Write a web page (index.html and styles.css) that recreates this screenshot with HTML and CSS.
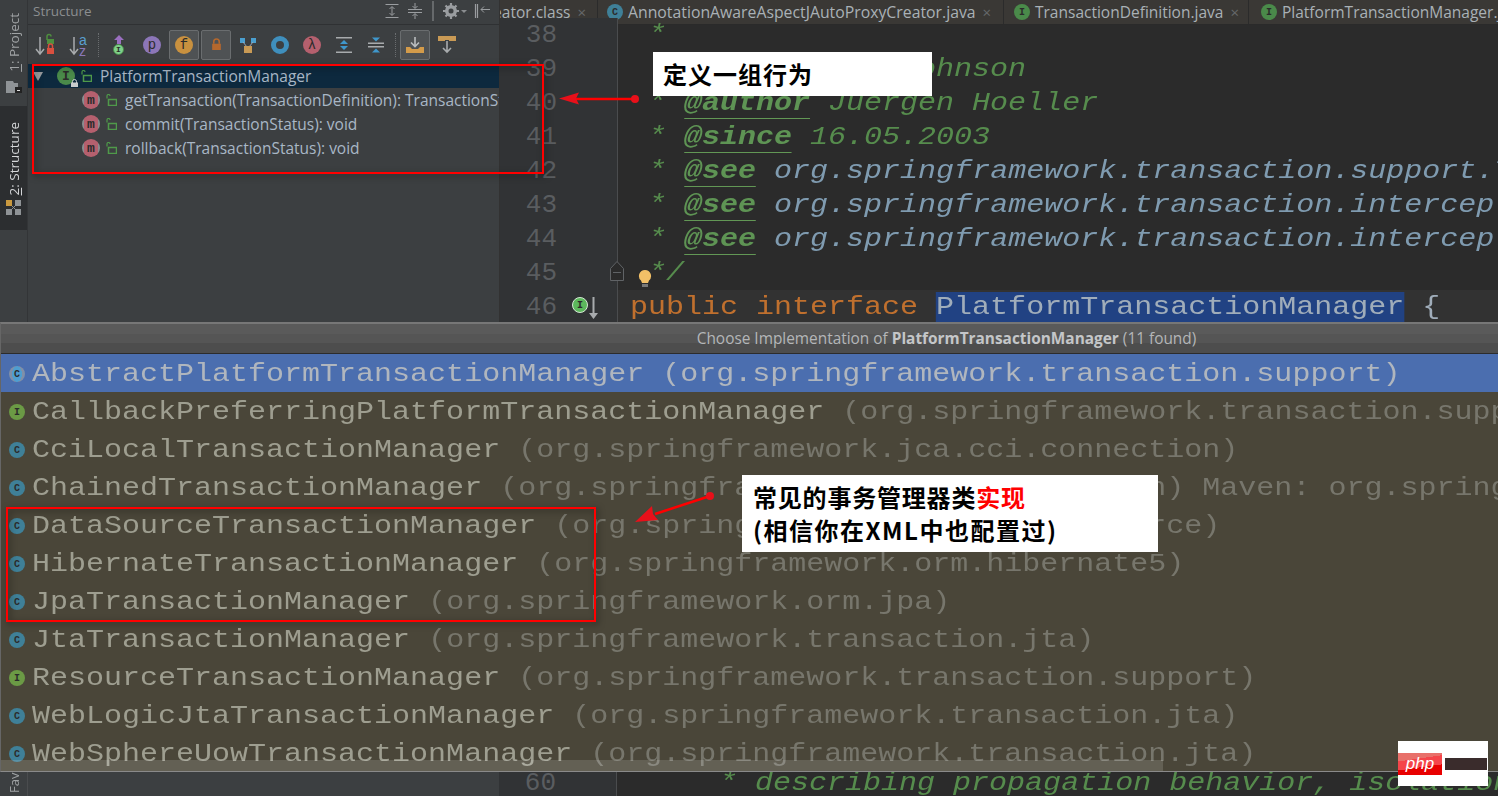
FILE: index.html
```html
<!DOCTYPE html>
<html lang="en">
<head>
<meta charset="utf-8">
<title>PlatformTransactionManager</title>
<link rel="stylesheet" href="styles.css">
</head>
<body>
<div class="page">
  <section class="top">
    <nav class="rail">
      <div class="rail-item rail-project">
        <span class="rail-label"><u>1</u>: Project</span>
        <svg class="rail-icon" width="16" height="14" viewBox="0 0 16 14"><path d="M0 2h7l1 2h4v10H0z" fill="#8f9396"/><rect x="9" y="8" width="7" height="6" fill="#222"/><rect x="11" y="11" width="3" height="1" fill="#ddd"/></svg>
      </div>
      <div class="rail-item rail-structure">
        <span class="rail-label"><u>2</u>: Structure</span>
        <svg class="rail-icon" width="15" height="15" viewBox="0 0 15 15"><rect width="6" height="6" fill="#c9993f"/><rect x="9" width="6" height="6" fill="#8f9396"/><rect y="9" width="6" height="6" fill="#8f9396"/><rect x="9" y="9" width="6" height="6" fill="#8f9396"/><path d="M6 6l3 3M9 6L6 9" stroke="#8f9396"/></svg>
      </div>
    </nav>

    <aside class="structure">
      <header class="panel-head">
        <span class="panel-title">Structure</span>
        <div class="panel-actions">
          <svg width="16" height="16" viewBox="0 0 16 16" fill="none" stroke="#9a9da0"><path d="M1.500 1.500h13M1.500 14.500h13M8 4v8M5.500 6L8 3.500 10.500 6M5.500 10L8 12.500 10.500 10"/></svg>
          <svg width="16" height="16" viewBox="0 0 16 16" fill="none" stroke="#9a9da0"><path d="M1 6.500h14M1 9.500h14M8 0v5M5.500 3L8 5.500 10.500 3M8 16v-5M5.500 13L8 10.500 10.500 13"/></svg>
          <span class="head-sep"></span>
          <svg width="24" height="16" viewBox="0 0 24 16"><circle cx="8" cy="8" r="4.500" fill="none" stroke="#9a9da0" stroke-width="3"/><path d="M8 0v16M0 8h16M2.500 2.500l11 11M13.500 2.500l-11 11" stroke="#9a9da0" stroke-width="2.200"/><circle cx="8" cy="8" r="2.500" fill="#3c3f41"/><path d="M18 7h6l-3 3z" fill="#8a8d90"/></svg>
          <svg width="16" height="16" viewBox="0 0 16 16" fill="none" stroke="#9a9da0"><path d="M1.500 1v14M3.500 1v14" stroke-width="1.200"/><path d="M7 6.500h9M10 3.500L7 6.500l3 3"/></svg>
        </div>
      </header>

      <div class="toolbar">
        <button class="tool"><svg width="24" height="24" viewBox="0 0 24 24"><path d="M6 4v17M2 16l4 5 4-5" fill="none" stroke="#a8abad" stroke-width="1.500"/><path d="M13 7V3.500a2 2 0 0 1 4 0" fill="none" stroke="#4e8f3f" stroke-width="1.500"/><rect x="13" y="6" width="7" height="5" fill="#4e8f3f"/><path d="M14.500 15v-2a2 2 0 0 1 4 0v2" fill="none" stroke="#d9503f" stroke-width="1.500"/><rect x="13" y="15" width="7" height="6" fill="#d9503f"/></svg></button>
        <button class="tool tool-az"><svg width="24" height="24" viewBox="0 0 24 24"><path d="M6 4v17M2 16l4 5 4-5" fill="none" stroke="#a8abad" stroke-width="1.500"/><text x="11" y="12" class="az az-a">a</text><text x="11" y="23" class="az az-z">z</text></svg></button>
        <span class="tool-sep"></span>
        <button class="tool tool-up"><span class="up-icon"><svg width="10" height="9" viewBox="0 0 10 9"><path d="M5 0l5 5H7v4H3V5H0z" fill="#9a6fc0"/></svg><span class="badge badge-i-light">I</span></span></button>
        <button class="tool"><span class="badge badge-lg badge-p">p</span></button>
        <button class="tool tool-on"><span class="badge badge-lg badge-f">f</span></button>
        <button class="tool tool-on"><svg width="11" height="13" viewBox="0 0 14 16"><path d="M3.500 7V4.500a3.500 3.500 0 0 1 7 0V7" fill="none" stroke="#b5682d" stroke-width="2"/><rect x="1.500" y="7" width="11" height="8" fill="#b5682d"/></svg></button>
        <button class="tool"><svg width="16" height="16" viewBox="0 0 16 16"><rect y="1" width="5" height="5" fill="#4a9fd0"/><rect x="11" y="1" width="5" height="5" fill="#4a9fd0"/><path d="M3 5l4 5M13 5l-4 5" stroke="#9ab" /><rect x="4" y="9" width="8" height="7" fill="#c99a55"/></svg></button>
        <button class="tool"><span class="donut"></span></button>
        <button class="tool"><span class="badge badge-lg badge-l">λ</span></button>
        <button class="tool"><svg width="18" height="18" viewBox="0 0 18 18"><path d="M1 1h16v1.500H1zM1 15.500h16V17H1z" fill="#a8abad"/><path d="M9 4l4 4H5zM9 14l-4-4h8z" fill="#3f97cc"/></svg></button>
        <button class="tool"><svg width="18" height="18" viewBox="0 0 18 18"><path d="M1 6.500h16V8H1zM1 10h16v1.500H1z" fill="#a8abad"/><path d="M9 5.500l-4-4h8zM9 12.500l4 4H5z" fill="#3f97cc"/></svg></button>
        <span class="tool-sep tool-sep-2"></span>
        <button class="tool tool-on"><svg width="18" height="18" viewBox="0 0 18 18"><path d="M9 1v9M5 6.500l4 4 4-4" fill="none" stroke="#b9bcbe" stroke-width="1.600"/><path d="M0 11h4l2 2h6l2-2h4v6H0z" fill="#d39b4a"/></svg></button>
        <button class="tool"><svg width="18" height="18" viewBox="0 0 18 18"><path d="M0 0h18v5H11v-1H7v1H0z" fill="#c99a55"/><path d="M9 5v11M5 12l4 4 4-4" fill="none" stroke="#a8abad" stroke-width="1.600"/></svg></button>
      </div>

      <ul class="tree">
        <li class="tree-row tree-root">
          <svg class="twisty" width="10" height="9" viewBox="0 0 10 9"><path d="M0 0h10L5 9z" fill="#9a9da0"/></svg>
          <span class="badge badge-md badge-i"><span>I</span><svg class="badge-lock" width="7" height="8" viewBox="0 0 7 8"><path d="M1.500 4V2.500a2 2 0 0 1 4 0V4" fill="none" stroke="#c9ccce"/><rect y="3.500" width="7" height="4.500" fill="#c9ccce"/></svg></span>
          <svg class="open-lock" width="11" height="12" viewBox="0 0 11 12"><path d="M1 4.500V2a1.500 1.500 0 0 1 3 0" fill="none" stroke="#4f9a4a" stroke-width="1.200"/><rect x="2.500" y="5.500" width="8" height="6" fill="none" stroke="#4f9a4a" stroke-width="1.500"/></svg>
          <span class="tree-text">PlatformTransactionManager</span>
        </li>
        <li class="tree-row tree-child">
          <span class="badge badge-md badge-m">m</span>
          <svg class="open-lock" width="11" height="12" viewBox="0 0 11 12"><path d="M1 4.500V2a1.500 1.500 0 0 1 3 0" fill="none" stroke="#4f9a4a" stroke-width="1.200"/><rect x="2.500" y="5.500" width="8" height="6" fill="none" stroke="#4f9a4a" stroke-width="1.500"/></svg>
          <span class="tree-text">getTransaction(TransactionDefinition): TransactionStatus</span>
        </li>
        <li class="tree-row tree-child">
          <span class="badge badge-md badge-m">m</span>
          <svg class="open-lock" width="11" height="12" viewBox="0 0 11 12"><path d="M1 4.500V2a1.500 1.500 0 0 1 3 0" fill="none" stroke="#4f9a4a" stroke-width="1.200"/><rect x="2.500" y="5.500" width="8" height="6" fill="none" stroke="#4f9a4a" stroke-width="1.500"/></svg>
          <span class="tree-text">commit(TransactionStatus): void</span>
        </li>
        <li class="tree-row tree-child">
          <span class="badge badge-md badge-m">m</span>
          <svg class="open-lock" width="11" height="12" viewBox="0 0 11 12"><path d="M1 4.500V2a1.500 1.500 0 0 1 3 0" fill="none" stroke="#4f9a4a" stroke-width="1.200"/><rect x="2.500" y="5.500" width="8" height="6" fill="none" stroke="#4f9a4a" stroke-width="1.500"/></svg>
          <span class="tree-text">rollback(TransactionStatus): void</span>
        </li>
      </ul>
    </aside>

    <main class="editor">
      <div class="tabs">
        <div class="tab tab-clipped"><span class="tab-name">AopProxyCreator.class</span><span class="tab-x">×</span></div>
        <div class="tab tab-2"><span class="badge badge-sm badge-c">C</span><span class="tab-name">AnnotationAwareAspectJAutoProxyCreator.java</span><span class="tab-x">×</span></div>
        <div class="tab tab-3"><span class="badge badge-sm badge-i">I</span><span class="tab-name">TransactionDefinition.java</span><span class="tab-x">×</span></div>
        <div class="tab tab-4"><span class="badge badge-sm badge-i">I</span><span class="tab-name">PlatformTransactionManager.java</span></div>
      </div>
      <div class="code">
        <div class="line"><span class="num">38</span><span class="src"><span class="cm"> *</span></span></div>
        <div class="line"><span class="num">39</span><span class="src"><span class="cm"> * </span><span class="tag">@author</span><span class="cm"> Rod Johnson</span></span></div>
        <div class="line"><span class="num">40</span><span class="src"><span class="cm"> * </span><span class="tag">@author</span><span class="cm"> Juergen Hoeller</span></span></div>
        <div class="line"><span class="num">41</span><span class="src"><span class="cm"> * </span><span class="tag">@since</span><span class="cm"> 16.05.2003</span></span></div>
        <div class="line"><span class="num">42</span><span class="src"><span class="cm"> * </span><span class="tag">@see</span> <span class="ref">org.springframework.transaction.support.TransactionTemplate</span></span></div>
        <div class="line"><span class="num">43</span><span class="src"><span class="cm"> * </span><span class="tag">@see</span> <span class="ref">org.springframework.transaction.interceptor.TransactionInterceptor</span></span></div>
        <div class="line"><span class="num">44</span><span class="src"><span class="cm"> * </span><span class="tag">@see</span> <span class="ref">org.springframework.transaction.interceptor.TransactionProxyFactoryBean</span></span></div>
        <div class="line line-fold">
          <span class="num">45</span>
          <svg class="fold" width="14" height="20" viewBox="0 0 14 20"><path d="M.5 7.500L7 .5l6.500 7v12H.5z" fill="#2b2b2b" stroke="#606366"/><path d="M3 11.500h8" stroke="#606366"/></svg>
          <svg class="bulb" width="14" height="18" viewBox="0 0 14 18"><path d="M7 0a6 6 0 0 0-4 10.500L4 13h6l1-2.500A6 6 0 0 0 7 0z" fill="#f3c067"/><rect x="4" y="14" width="6" height="3" fill="#777"/></svg>
          <span class="src"><span class="cm"> */</span></span>
        </div>
        <div class="line line-current">
          <span class="num">46</span>
          <span class="impl"><span class="badge badge-sm badge-impl">I</span><svg width="9" height="22" viewBox="0 0 9 22"><path d="M3.500 0h2v16H9l-4.500 6L0 16h3.500z" fill="#a8abad"/></svg></span>
          <span class="src"><span class="kw">public interface</span> <span class="sel">PlatformTransactionManager</span> {</span>
        </div>
      </div>
    </main>
  </section>

  <section class="popup">
    <header class="popup-head">Choose Implementation of <b>PlatformTransactionManager</b> (11 found)</header>
    <ul class="list">
      <li class="row row-sel"><span class="badge badge-sm badge-c badge-c-sel">C</span><span class="row-text">AbstractPlatformTransactionManager <span class="pkg">(org.springframework.transaction.support)</span></span></li>
      <li class="row"><span class="badge badge-sm badge-ii">I</span><span class="row-text">CallbackPreferringPlatformTransactionManager <span class="pkg">(org.springframework.transaction.support)</span></span></li>
      <li class="row"><span class="badge badge-sm badge-c">C</span><span class="row-text">CciLocalTransactionManager <span class="pkg">(org.springframework.jca.cci.connection)</span></span></li>
      <li class="row"><span class="badge badge-sm badge-c">C</span><span class="row-text">ChainedTransactionManager <span class="pkg">(org.springframework.data.transaction) Maven: org.springframework.data</span></span></li>
      <li class="row"><span class="badge badge-sm badge-c">C</span><span class="row-text">DataSourceTransactionManager <span class="pkg">(org.springframework.jdbc.datasource)</span></span></li>
      <li class="row"><span class="badge badge-sm badge-c">C</span><span class="row-text">HibernateTransactionManager <span class="pkg">(org.springframework.orm.hibernate5)</span></span></li>
      <li class="row"><span class="badge badge-sm badge-c">C</span><span class="row-text">JpaTransactionManager <span class="pkg">(org.springframework.orm.jpa)</span></span></li>
      <li class="row"><span class="badge badge-sm badge-c">C</span><span class="row-text">JtaTransactionManager <span class="pkg">(org.springframework.transaction.jta)</span></span></li>
      <li class="row"><span class="badge badge-sm badge-ii">I</span><span class="row-text">ResourceTransactionManager <span class="pkg">(org.springframework.transaction.support)</span></span></li>
      <li class="row"><span class="badge badge-sm badge-c">C</span><span class="row-text">WebLogicJtaTransactionManager <span class="pkg">(org.springframework.transaction.jta)</span></span></li>
      <li class="row"><span class="badge badge-sm badge-c">C</span><span class="row-text">WebSphereUowTransactionManager <span class="pkg">(org.springframework.transaction.jta)</span></span></li>
    </ul>
    <div class="popup-scroll"></div>
  </section>

  <section class="bottom">
    <div class="fav"><span class="fav-label">Fav</span></div>
    <div class="line line-bottom"><span class="num">60</span><span class="src"><span class="cm">     * describing propagation behavior, isolation level, timeout etc.</span></span></div>
  </section>

  <svg class="marks" width="1498" height="796" viewBox="0 0 1498 796">
    <rect class="box" x="33" y="65" width="510" height="108"/>
    <rect class="box" x="7" y="508" width="588" height="113"/>
    <path class="arrow-line" d="M635 99H575"/>
    <path class="arrow-head" d="M559 98.500l20-6-3 6 3 6z"/>
    <circle class="arrow-dot" cx="635" cy="99" r="4"/>
    <path class="arrow-line" d="M710 496L655 514"/>
    <path class="arrow-head" d="M635 522l17-16 1 8 5 6z"/>
    <circle class="arrow-dot" cx="710" cy="496" r="4"/>
  </svg>
  <div class="note note-1">定义一组行为</div>
  <div class="note note-2">常见的事务管理器类<em>实现</em><br><span class="note-sub">(相信你在XML中也配置过)</span></div>
  <div class="watermark"><span class="wm-php">php</span><span class="wm-text"></span></div>
</div>
</body>
</html>
```
FILE: styles.css
```css
* { box-sizing: border-box; }
html, body { margin: 0; padding: 0; background: #2b2b2b; }
ul { list-style: none; margin: 0; padding: 0; }
button { border: 0; background: none; padding: 0; margin: 0; }

.page {
  position: relative;
  width: 1498px;
  height: 796px;
  overflow: hidden;
  display: flex;
  flex-direction: column;
  font-family: "Open Sans", "Noto Sans", sans-serif;
}

/* top area */
.top { display: flex; height: 322px; flex: none; }

.rail {
  width: 28px;
  flex: none;
  background: #3c3f41;
  border-right: 1px solid #333537;
  display: flex;
  flex-direction: column;
}
.rail-item {
  display: flex;
  flex-direction: column;
  align-items: center;
  color: #a0a3a5;
  font-size: 13.500px;
}
.rail-label { writing-mode: vertical-rl; transform: rotate(180deg); line-height: 16px; white-space: nowrap; }
.rail-project { height: 106px; padding-top: 13px; gap: 7px; }
.rail-structure { height: 124px; padding-top: 16px; gap: 5px; background: #2c2e30; color: #d4d6d8; }

.structure {
  width: 472px;
  flex: none;
  background: #3c3f41;
  border-right: 1px solid #323232;
  overflow: hidden;
}
.panel-head {
  height: 25px;
  display: flex;
  align-items: center;
  justify-content: space-between;
  padding: 0 9px 2px 5px;
  border-bottom: 1px solid #2f3133;
}
.panel-title { color: #8b8e90; font-size: 13.500px; }
.panel-actions { display: flex; align-items: center; gap: 7px; }
.head-sep { width: 2px; height: 20px; background: #66696b; margin: 0 2px; }

.toolbar { display: flex; align-items: center; gap: 2px; height: 39px; padding: 0 0 0 3px; }
.tool {
  width: 30px;
  height: 30px;
  flex: none;
  border: 1px solid transparent;
  border-radius: 2px;
  display: flex;
  align-items: center;
  justify-content: center;
}
.tool-on { background: #4f5254; border-color: #6a6d6f; }
.tool-az { padding-left: 4px; }
.tool-up { padding-right: 3px; }
.tool-sep { width: 6px; height: 24px; flex: none; border-left: 1px dotted #6a6d6f; margin-left: 3px; margin-right: -1px; }
.tool-sep-2 { margin-right: -3px; margin-left: 2px; }
.az { font-family: "Liberation Sans", sans-serif; font-size: 14px; font-weight: 400; }
.az-a { fill: #5a9fd0; }
.az-z { fill: #8a78b8; }
.up-icon { display: flex; flex-direction: column; align-items: center; }
.donut { width: 18px; height: 18px; border-radius: 50%; border: 5px solid #3f8fbd; background: #3c3f41; }

.badge {
  position: relative;
  display: inline-flex;
  align-items: center;
  justify-content: center;
  flex: none;
  border-radius: 50%;
  font-family: "Liberation Mono", monospace;
  font-weight: 700;
  color: #2b2b2b;
}
.badge-sm { width: 16px; height: 16px; font-size: 10px; }
.badge-md { width: 18px; height: 18px; font-size: 13px; }
.badge-lg { width: 18px; height: 18px; font-size: 14px; font-weight: 400; }
.badge-p { background: #8c76b8; }
.badge-f { background: #c9913f; }
.badge-l { background: #b5606e; }
.badge-i { background: #4a8a4a; }
.badge-i-light { width: 11px; height: 11px; background: #7fd08a; font-size: 8px; border: 1px solid #4a8a4a; }
.badge-ii { background: #6b9a45; }
.badge-c { background: #3f8098; }
.badge-c-sel { background: radial-gradient(ellipse 5px 8px, #4f9ed0 95%, #8090a8 100%); }
.badge-impl { background: #5cb85c; border: 1px solid #d5e8d5; }
.badge-m {
  background: linear-gradient(90deg, #8a8d90 0 2px, #b5606e 2px 16px, #8a8d90 16px);
}
.badge-lock { position: absolute; right: -3px; bottom: -2px; }

.tree-row { display: flex; align-items: center; height: 24px; white-space: nowrap; overflow: hidden; }
.tree-root { background: #0d293e; }
.twisty { margin: 0 14px 0 5px; flex: none; }
.tree-child { padding-left: 54px; }
.open-lock { margin: 0 8px 0 6px; flex: none; }
.tree-text { color: #a9b7c6; font-size: 15.500px; }

/* editor */
.editor { flex: 1; min-width: 0; display: flex; flex-direction: column; background: #2b2b2b; overflow: hidden; }
.tabs { height: 25px; flex: none; display: flex; background: #3a3835; border-bottom: 1px solid #2a2a2a; overflow: hidden; }
.tab {
  display: flex;
  align-items: center;
  flex: none;
  color: #a9b1b6;
  font-size: 15.500px;
  white-space: nowrap;
  border-right: 1px solid #2b2b2b;
}
.tab .badge { margin-right: 5px; }
.tab-x { color: #66696b; margin-left: 7px; font-size: 15px; }
.tab-clipped { width: 98px; justify-content: flex-end; padding-right: 11px; overflow: hidden; }
.tab-2 { width: 406px; padding-left: 9px; font-size: 15.800px; }
.tab-3 { width: 245px; padding-left: 10px; }
.tab-4 { padding-left: 12px; border-right: 0; }

.code { margin-top: -7px; }
.line { position: relative; display: flex; height: 34px; white-space: pre; }
.num {
  display: block;
  width: 118px;
  flex: none;
  padding-right: 60px;
  text-align: right;
  background: #313335;
  border-right: 1px solid #4a4c4e;
  color: #5a5d60;
  font: 400 26px/34px "Liberation Mono", monospace;
}
.src {
  display: block;
  margin-left: 12px;
  color: #a0adba;
  font: 400 26px/34px "Liberation Mono", monospace;
  transform: scaleX(1.154);
  transform-origin: left;
}
.cm { color: #568c4d; font-style: italic; }
.tag { color: #5e9454; font-weight: 700; font-style: italic; border-bottom: 1px solid #629755; }
.ref { color: #7f9bb0; font-style: italic; }
.kw { color: #c0702e; }
.sel { background: #214283; }
.line-current { background: #323232; }
.fold { position: absolute; left: 110px; top: 5px; z-index: 1; }
.bulb { position: absolute; left: 138px; top: 14px; z-index: 1; }
.impl { position: absolute; left: 72px; top: 7px; display: flex; gap: 1px; }

/* popup */
.popup { position: relative; height: 450px; flex: none; border-top: 2px solid #777; border-left: 1px solid #666; border-bottom: 1px solid #8a8a8a; background: #4a4639; overflow: hidden; }
.popup-head {
  height: 30px;
  line-height: 30px;
  text-align: center;
  padding-left: 394px;
  font-size: 15.400px;
  color: #b4b6b8;
  white-space: nowrap;
  background: linear-gradient(#5a5a5a 0 33%, #555 33% 66%, #4d4d4d 66%);
  border-bottom: 1px solid #2c2c2c;
}
.popup-head b { color: #c4c6c8; }
.row { display: flex; align-items: center; height: 38px; padding: 2px 0 0 8px; white-space: pre; }
.row .badge { margin-right: 7px; }
.row-text {
  font: 400 26px/36px "Liberation Mono", monospace;
  color: #9e9e90;
  transform: scaleX(1.154);
  transform-origin: left;
}
.pkg { color: #77766c; }
.row-sel { background: #4b6eaf; }
.row-sel .row-text { color: #b0b6be; }
.row-sel .pkg { color: #b0b6be; }
.popup-scroll { position: absolute; left: 0; bottom: 0; width: 1162px; height: 11px; background: rgba(255, 255, 255, .14); }

/* bottom */
.bottom { flex: 1; display: flex; overflow: hidden; background: #2b2b2b; }
.fav { width: 500px; flex: none; background: #3c3f41; color: #a0a3a5; font-size: 13px; }
.fav-label { display: block; width: 28px; height: 24px; text-align: right; padding-bottom: 1px; writing-mode: vertical-rl; transform: rotate(180deg); line-height: 28px; border-left: 1px solid #4a4c4e; }
.line-bottom { flex: 1; margin: -6px 0 0 -1px; }

/* annotations */
.marks { position: absolute; left: 0; top: 0; pointer-events: none; }
.box { fill: none; stroke: #f00; stroke-width: 2; filter: drop-shadow(2px 2px 3px rgba(0,0,0,.5)); }
.arrow-line { fill: none; stroke: #f00; stroke-width: 2.500; }
.arrow-head, .arrow-dot { fill: #e8101a; }
.note {
  position: absolute;
  background: #fff;
  color: #000;
  font-family: "Noto Sans CJK SC", sans-serif;
  font-weight: 700;
  font-size: 24px;
  white-space: nowrap;
}
.note em { color: #f00; font-style: normal; }
.note-1 { left: 653px; top: 52px; width: 279px; height: 44px; line-height: 44px; padding-left: 10px; letter-spacing: 1px; }
.note-2 { left: 742px; top: 475px; width: 416px; height: 77px; padding: 5px 0 0 11px; line-height: 33px; letter-spacing: .8px; }
.note-sub { letter-spacing: 1.500px; }
.watermark { position: absolute; left: 1398px; top: 741px; width: 90px; height: 45px; background: #fff; display: flex; align-items: center; gap: 3px; }
.wm-php {
  width: 44px;
  height: 22px;
  background: linear-gradient(172deg, #e8706a 0 30%, #f5454a 30% 62%, #e80000 62%);
  color: #fff;
  font: italic 400 17px/21px "Liberation Sans", sans-serif;
  text-align: center;
}
.wm-text { width: 42px; height: 12px; background: #3a2c2c; }
```
